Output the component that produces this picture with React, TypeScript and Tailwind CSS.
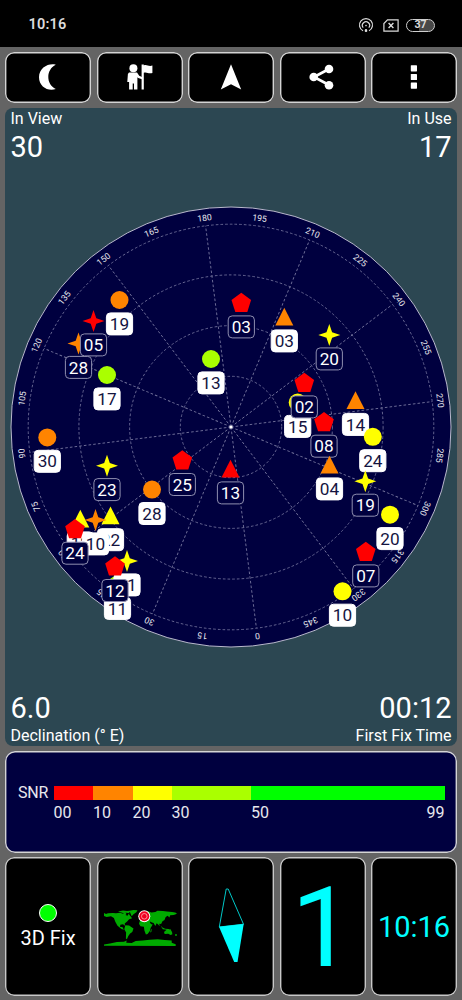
import React from "react";

type Shape = "circle" | "star" | "triangle" | "pentagon";

interface Satellite {
  id: string;
  shape: Shape;
  color: string;
  x: number;
  y: number;
  used?: boolean;
}

const RED = "#ff0000";
const ORANGE = "#ff8400";
const YELLOW = "#ffff00";
const LIME = "#aaff00";

// x and y are relative to the zenith, later entries cover earlier ones
const SATELLITES: Satellite[] = [
  { id: "19", shape: "circle", color: ORANGE, x: -111.5, y: -127, used: true },
  { id: "28", shape: "star", color: ORANGE, x: -152.5, y: -83.5 },
  { id: "05", shape: "star", color: RED, x: -137.5, y: -106 },
  { id: "17", shape: "circle", color: LIME, x: -124, y: -52, used: true },
  { id: "13", shape: "circle", color: LIME, x: -20, y: -68, used: true },
  { id: "03", shape: "pentagon", color: RED, x: 10.3, y: -124 },
  { id: "03", shape: "triangle", color: ORANGE, x: 53.3, y: -110, used: true },
  { id: "20", shape: "star", color: YELLOW, x: 98.3, y: -92 },
  { id: "15", shape: "circle", color: YELLOW, x: 66.7, y: -24.5, used: true },
  { id: "02", shape: "pentagon", color: RED, x: 73.3, y: -44 },
  { id: "14", shape: "triangle", color: ORANGE, x: 124.5, y: -26.5, used: true },
  { id: "08", shape: "pentagon", color: RED, x: 93, y: -4.7 },
  { id: "24", shape: "circle", color: YELLOW, x: 141.8, y: 9.8, used: true },
  { id: "04", shape: "triangle", color: ORANGE, x: 98.5, y: 38, used: true },
  { id: "19", shape: "star", color: YELLOW, x: 134.3, y: 54.3 },
  { id: "20", shape: "circle", color: YELLOW, x: 159, y: 87.7, used: true },
  { id: "07", shape: "pentagon", color: RED, x: 134.8, y: 125 },
  { id: "10", shape: "circle", color: YELLOW, x: 111.5, y: 164.3, used: true },
  { id: "30", shape: "circle", color: ORANGE, x: -183.7, y: 10.4, used: true },
  { id: "23", shape: "star", color: YELLOW, x: -124, y: 38.7 },
  { id: "28", shape: "circle", color: ORANGE, x: -79, y: 62.6, used: true },
  { id: "25", shape: "pentagon", color: RED, x: -48.7, y: 33.6 },
  { id: "13", shape: "triangle", color: RED, x: -0.5, y: 42 },
  { id: "22", shape: "triangle", color: YELLOW, x: -120.5, y: 88.8, used: true },
  { id: "12", shape: "triangle", color: YELLOW, x: -150.7, y: 92, used: true },
  { id: "10", shape: "star", color: ORANGE, x: -135.5, y: 93, used: true },
  { id: "24", shape: "pentagon", color: RED, x: -156, y: 102.3 },
  { id: "11", shape: "circle", color: LIME, x: -113.5, y: 157.5, used: true },
  { id: "21", shape: "star", color: YELLOW, x: -104, y: 134, used: true },
  { id: "12", shape: "pentagon", color: RED, x: -116, y: 139.6 },
];

const RINGS = [50.7, 101.4, 152.1, 202.8];
const AZIMUTHS = Array.from({ length: 24 }, (_, i) => i * 15);
const DECLINED_NORTH = 187.2;

const SNR_BANDS = [
  { label: "00", className: "w-[39.5px] bg-[#ff0000]" },
  { label: "10", className: "w-[39.5px] bg-[#ff8400]" },
  { label: "20", className: "w-[39px] bg-[#ffff00]" },
  { label: "30", className: "w-[79.5px] bg-[#aaff00]" },
  { label: "50", className: "flex-1 bg-[#00ff00]" },
];

const SNR_LABEL_WIDTHS = ["w-[39.5px]", "w-[39.5px]", "w-[39px]", "w-[79.5px]", "flex-1"];

function Marker({ shape, color }: { shape: Shape; color: string }) {
  switch (shape) {
    case "circle":
      return <circle r={9} fill={color} />;
    case "star":
      return <path d="M0-11 2.8-2.8 11 0 2.8 2.8 0 11-2.8 2.8-11 0-2.8-2.8Z" fill={color} />;
    case "triangle":
      return <path d="M0-9.3 9 8.5H-9Z" fill={color} />;
    case "pentagon":
      return <path d="M0-10.3 9.8-3 6 9H-6L-9.8-3Z" fill={color} />;
  }
}

function SkyPlot() {
  return (
    <svg
      width="442"
      height="442"
      viewBox="-221 -221 442 442"
      className="block shrink-0"
      fontFamily="Roboto, sans-serif"
      textAnchor="middle"
    >
      <circle r={220} fill="#00003f" stroke="#b9b9cc" strokeWidth={1} />
      <g fill="none" stroke="#71719a" strokeWidth={0.9} strokeDasharray="2.6 2.1">
        {RINGS.map((r) => (
          <circle key={r} r={r} />
        ))}
        {AZIMUTHS.filter((a) => a % 30 === 0).map((a) => (
          <line key={a} y2={-202.8} transform={`rotate(${a - DECLINED_NORTH})`} />
        ))}
      </g>
      <circle r={1.6} fill="#fff" />
      <g fill="#e8e8ee" fontSize={8.7}>
        {AZIMUTHS.map((a) => (
          <text key={a} y={-207.8} transform={`rotate(${a - DECLINED_NORTH})`}>
            {a}
          </text>
        ))}
      </g>
      {SATELLITES.map((s, i) => (
        <g key={i} transform={`translate(${s.x} ${s.y})`}>
          <Marker shape={s.shape} color={s.color} />
          <rect
            x={-13.1}
            y={12.9}
            width={26.2}
            height={22}
            rx={4}
            fill={s.used ? "#fff" : "#00003f"}
            stroke={s.used ? "#fff" : "#8f8fb0"}
            strokeWidth={1}
          />
          <text y={30} fontSize={17.2} fill={s.used ? "#14143f" : "#fff"}>
            {s.id}
          </text>
        </g>
      ))}
    </svg>
  );
}

function StatusBar() {
  return (
    <div className="flex h-[47px] items-center justify-between bg-black pt-[3px] pr-[27px] pl-[28.5px] text-[#dcdcdc]">
      <span className="pt-px text-[14.5px] leading-none font-semibold tracking-[0.2px]">10:16</span>
      <div className="flex items-center">
        <svg width="16" height="16" viewBox="0 0 16 16" fill="none" stroke="currentColor" strokeWidth="1.2">
          <path d="M5 13.8A6.5 6.5 0 1 1 11 13.8" />
          <path d="M5.2 10.6A3.6 3.6 0 1 1 10.8 10.6" />
          <circle cx="8" cy="8.6" r="0.8" fill="currentColor" stroke="none" />
          <path d="M8 12v3M6.8 13.6h2.4" strokeWidth="1.6" />
        </svg>
        <svg width="16" height="13" viewBox="0 0 16 13" fill="none" stroke="currentColor" strokeWidth="1.2" className="ml-[9px]">
          <path d="M4.5.9h10.6v11.2H.9V4.5Z" />
          <path d="m5.6 4 4.8 4.9M10.4 4 5.6 8.9" strokeWidth="1.4" />
        </svg>
        <div className="ml-[7px] flex h-[13px] w-[29px] items-center justify-center rounded-full border-[1.5px] border-[#cfcfcf] bg-linear-to-r from-black from-45% to-[#484848] to-45% text-[10.5px] leading-none font-bold">
          37
        </div>
      </div>
    </div>
  );
}

function ToolButton({ label, children }: { label: string; children: React.ReactNode }) {
  return (
    <button
      type="button"
      aria-label={label}
      className="flex items-center justify-center rounded-[9px] bg-black text-white inset-ring-[1.4px] inset-ring-[#d4d4d4]"
    >
      <svg width="40" height="32" viewBox="-20 -16 40 32" fill="currentColor">
        {children}
      </svg>
    </button>
  );
}

function Toolbar() {
  return (
    <div className="grid h-[51.5px] grid-cols-5 gap-[5.5px]">
      <ToolButton label="Night mode">
        <path d="M7.8-12.2C1-14.2-9-9.5-9 .2-9 9.5 0 14.8 7.8 12 2.8 9.5.3 5 .3 0S2.8-9.8 7.8-12.2Z" />
      </ToolButton>
      <ToolButton label="Waypoints">
        <circle cx="-6.6" cy="-8.8" r="4" />
        <path d="M-11-4.5h8l2.2 3.2 2.8 1.2v2.3l-3.8-1.2-.8-.7v12.2h-3.4V6.4h-1.3v6.1h-3.6V5h-1.8l.6-8Z" />
        <path d="M1.6-12.6h2.2v1c2.8-1.5 4.8 1.6 8.6.1v7.4c-3.8 1.5-5.4-1.4-8.6-.2v16.8H1.6Z" />
      </ToolButton>
      <ToolButton label="Navigate">
        <path d="M0-12.7 10.2 12.6 0 7.2-10.2 12.6Z" />
      </ToolButton>
      <ToolButton label="Share">
        <path d="M6-8-9 0 6 8" fill="none" stroke="currentColor" strokeWidth="2.7" />
        <circle cx="-9.3" r="4.3" />
        <circle cx="6" cy="-8" r="4.3" />
        <circle cx="6" cy="8.3" r="4.3" />
      </ToolButton>
      <ToolButton label="More">
        <rect x="-3.2" y="-11.8" width="6.2" height="6.2" rx="0.6" />
        <rect x="-3.2" y="-3.1" width="6.2" height="6.2" rx="0.6" />
        <rect x="-3.2" y="5.5" width="6.2" height="6.2" rx="0.6" />
      </ToolButton>
    </div>
  );
}

function SnrLegend() {
  return (
    <div className="mt-[5px] flex h-[102px] items-start rounded-[10px] bg-[#00003f] pt-[35px] pr-[12.5px] pl-[13px] text-[16px] leading-[16px] text-[#e8e8ee] inset-ring-[1.4px] inset-ring-[#d4d4d4]">
      <span className="w-[35.5px] -mt-px tracking-[-0.2px]">SNR</span>
      <div className="flex-1">
        <div className="flex h-[14.5px]">
          {SNR_BANDS.map((band) => (
            <div key={band.label} className={band.className} />
          ))}
        </div>
        <div className="mt-[4.5px] flex">
          {SNR_BANDS.map((band, i) => (
            <span key={band.label} className={SNR_LABEL_WIDTHS[i]}>
              {band.label}
            </span>
          ))}
          <span>99</span>
        </div>
      </div>
    </div>
  );
}

function WorldMap() {
  return (
    <svg width="76" height="44" viewBox="0 0 76 44" fill="#00aa00" className="ml-[2px]">
      {/* the Americas */}
      <path d="M1 9l2 1 2-.8 5-.3 3 .4 4-.6 3 1 2-1.6 1.5 2-1 1 2 .6 1.2-2 1.6 2.2 1.8 2.3-3 1-2 2.4-2.4 1.8.3 2.4-2-1.5-2.7.4-.2 2.2 2.3.2 1.5 2.6-2.4-.8-4-3.2-2.2-4-1.4-3.8L8 12.3 3.6 13 1 12Z" />
      <path d="M15 7.5l5-1 4 .6 5-.5-3 1.6 1 1-4-.5-3 .4ZM26.5 6.8l4-.7 4 .2-1.2 2-2.8 2-1.8 2-1.4-3.2Z" />
      <path d="M22.3 21.2l3.8.2 2.2 1.6 2.2 1.5-1.2 3.4-2.2 1.7-1.8 2.4-1.4 3.2-1-.8.2-6-1.8-3.2Z" />
      {/* Africa, Europe and Asia */}
      <path d="M36.7 17.3l3-1.3 3.2.6 3.3.4 1.7 3 1.8.4-2.1 3.5-.8 3.2-2.2 3-1.7.5-1.5-4.2-.5-3.6-3.4-.5-1.5-2.5ZM37.2 15.6l.3-2.4 2.5-1.2 1.2-3 3-1.9 2.2.7 2 .8 4-.5 2-1.3 5.5.3 4 .5 5 .5 4 .6 0 .7-2.2 1.6-3.5.3-.8 2.3-1.7-1.8-2 1.3-1.2 2.9-2 1.3-1.4 2.7-1.8-.2.3 2.4-1.4-1.7-1.5-1.3-1.4 2.9-1.7-3.2-1.6-.5-2-1-1 2.1-2.3.9-2.5-4.4-3.3.5-2.2-1.1Z" />
      <path d="M57.5 21.5l2 2 2.6 1.2 3.5.2 2.2 1.4-4-.6-4-.4ZM61 28l2.6-2.3 2.4.2 1.3-.8 1.7 2.8.4 2.4-1.8.8-2.4-1.3-3.5.2ZM47.8 25.8l1-1.1-.5 3.2-1.1.5Z" />
      <path d="M68 8.4l5 .5 1 .9-2 .6-4-.4Z" />
      <circle cx="73" cy="31" r="0.9" />
      {/* Antarctica */}
      <path d="M1 41.8v-1.3l6-1 7-1.4 7-.3 2.6-1.3-.3 2.2 5.4.2 4-1.8 7-.7 7-.7 8-.5 7 .8 7 .6 0 2.2 4 1.4v1.8Z" />
      <circle cx="41.3" cy="12.3" r="6" fill="#fff" />
      <circle cx="41.3" cy="12.3" r="5" fill="#f00020" />
      <circle cx="41.3" cy="12.3" r="2.8" fill="none" stroke="#ffb0b0" strokeWidth="0.8" />
    </svg>
  );
}

function Tile({ children }: { children: React.ReactNode }) {
  return (
    <div className="flex flex-col items-center justify-center overflow-hidden rounded-[9px] bg-black inset-ring-[1.4px] inset-ring-[#c8c8c8]">
      {children}
    </div>
  );
}

function BottomTiles() {
  return (
    <div className="mt-[4.5px] grid h-[138.5px] grid-cols-5 gap-[5.5px]">
      <Tile>
        <div className="mt-[2px] size-[18px] rounded-full border border-white bg-[#00ff00]" />
        <span className="mt-[4px] text-[20px] leading-[24px] text-white">3D Fix</span>
      </Tile>
      <Tile>
        <WorldMap />
      </Tile>
      <Tile>
        <svg width="28" height="76" viewBox="0 0 28 76">
          <path d="M9.2 1h2L26.5 36.2 2.3 39Z" fill="none" stroke="#00c8c8" strokeWidth="1" />
          <path d="M2 38.8 26.7 36 20.5 74h-3.3Z" fill="#00ffff" />
        </svg>
      </Tile>
      <Tile>
        <span className="pt-[4px] text-[111px] leading-none text-[#00ffff]">1</span>
      </Tile>
      <Tile>
        <span className="pt-[2px] text-[29px] leading-none text-[#00ffff]">10:16</span>
      </Tile>
    </div>
  );
}

export default function App() {
  return (
    <div className="flex h-[1000px] w-[462px] flex-col overflow-hidden bg-[#646464] font-[Roboto,sans-serif]">
      <StatusBar />
      <main className="flex flex-1 flex-col px-[5px] pt-[4.5px]">
        <Toolbar />
        <section className="mt-[5px] flex h-[637.5px] flex-col justify-between rounded-[8px] bg-[#2c4752] px-[5.5px] text-white">
          <div className="flex justify-between">
            <div className="pt-px">
              <div className="text-[16px] leading-[20px]">In View</div>
              <div className="text-[29px] leading-[36px]">30</div>
            </div>
            <div className="pt-px text-right">
              <div className="text-[16px] leading-[20px]">In Use</div>
              <div className="text-[29px] leading-[36px]">17</div>
            </div>
          </div>
          <div className="-mx-[5.5px] -mt-px flex justify-center">
            <SkyPlot />
          </div>
          <div className="flex justify-between">
            <div>
              <div className="text-[29px] leading-[36px]">6.0</div>
              <div className="text-[16px] leading-[20px]">Declination (° E)</div>
            </div>
            <div className="text-right">
              <div className="text-[29px] leading-[36px]">00:12</div>
              <div className="text-[16px] leading-[20px]">First Fix Time</div>
            </div>
          </div>
        </section>
        <SnrLegend />
        <BottomTiles />
      </main>
    </div>
  );
}
